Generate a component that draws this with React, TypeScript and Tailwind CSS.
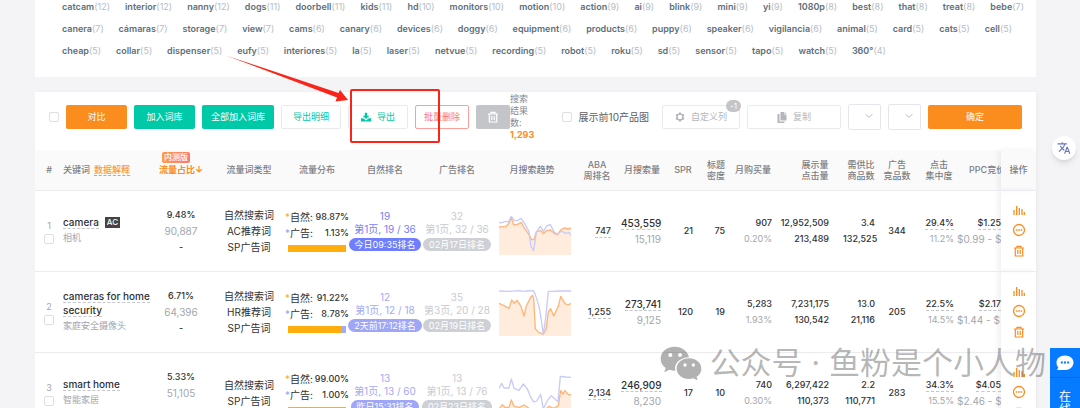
import type { ReactNode } from "react";
import { ChevronDown } from "lucide-react";
import { MdTranslate } from "react-icons/md";

type Word = [string, number];

const wordRows: { pad: string; words: Word[] }[] = [
  {
    pad: "pr-3",
    words: [
      ["catcam", 12], ["interior", 12], ["nanny", 12], ["dogs", 11], ["doorbell", 11], ["kids", 11],
      ["hd", 10], ["monitors", 10], ["motion", 10], ["action", 9], ["ai", 9], ["blink", 9], ["mini", 9],
      ["yi", 9], ["1080p", 8], ["best", 8], ["that", 8], ["treat", 8], ["bebe", 7],
    ],
  },
  {
    pad: "pr-6",
    words: [
      ["canera", 7], ["cámaras", 7], ["storage", 7], ["view", 7], ["cams", 6], ["canary", 6],
      ["devices", 6], ["doggy", 6], ["equipment", 6], ["products", 6], ["puppy", 6], ["speaker", 6],
      ["vigilancia", 6], ["animal", 5], ["card", 5], ["cats", 5], ["cell", 5],
    ],
  },
  {
    pad: "pr-[150px]",
    words: [
      ["cheap", 5], ["collar", 5], ["dispenser", 5], ["eufy", 5], ["interiores", 5], ["la", 5],
      ["laser", 5], ["netvue", 5], ["recording", 5], ["robot", 5], ["roku", 5], ["sd", 5],
      ["sensor", 5], ["tapo", 5], ["watch", 5], ["360°", 4],
    ],
  },
];

const rows = [
  {
    id: 1,
    keyword: ["camera"],
    ac: true,
    cn: "相机",
    share: ["9.48%", "90,887", "-"],
    types: ["自然搜索词", "AC推荐词", "SP广告词"],
    natural: "98.87%",
    ad: "1.13%",
    bar: 98.87,
    rank: ["19", "第1页, 19 / 36", "今日09:35排名"],
    fresh: true,
    adRank: ["32", "第1页, 32 / 36", "02月17日排名"],
    orange: "0,60 10,59 20,59 30,49 37,31 44,54 55,52 67,46 75,62 88,80 98,98 105,98 112,74 125,71 133,80 142,71 155,69 167,80 175,83 185,69 195,63 207,66 216,63",
    blue: "0,47 10,47 20,43 28,45 37,28 47,41 58,40 66,34 75,46 90,74 96,119 104,131 112,76 124,58 133,73 143,57 154,53 165,74 176,82 187,72 200,79 210,76 216,84",
    aba: "747",
    search: ["453,559", "15,119"],
    spr: "21",
    density: "75",
    buy: ["907", "0.20%"],
    shown: ["12,952,509", "213,489"],
    supply: ["3.4", "132,525"],
    rivals: "344",
    click: ["29.4%", "11.2%"],
    ppc: ["$1.25", "$0.99 - $"],
  },
  {
    id: 2,
    keyword: ["cameras for home", "security"],
    ac: false,
    cn: "家庭安全摄像头",
    share: ["6.71%", "64,396", "-"],
    types: ["自然搜索词", "HR推荐词", "SP广告词"],
    natural: "91.22%",
    ad: "8.78%",
    bar: 91.22,
    rank: ["12", "第1页, 12 / 18", "2天前17:12排名"],
    fresh: false,
    adRank: ["35", "第3页, 20 / 28", "02月19日排名"],
    orange: "0,46 15,53 30,61 38,36 46,46 54,37 66,55 75,84 82,54 95,28 101,22 104,32 109,122 120,134 133,138 141,125 148,72 155,62 164,84 178,55 185,25 198,47 208,51 216,46",
    blue: "0,9 30,10 60,8 75,10 84,9 104,8 111,26 120,56 127,96 133,140 140,90 148,10 160,10 180,9 216,9",
    aba: "1,255",
    search: ["273,741", "9,125"],
    spr: "120",
    density: "19",
    buy: ["5,283", "1.93%"],
    shown: ["7,231,175", "130,542"],
    supply: ["13.0", "21,116"],
    rivals: "205",
    click: ["22.5%", "14.5%"],
    ppc: ["$2.17", "$1.44 - $"],
  },
  {
    id: 3,
    keyword: ["smart home"],
    ac: false,
    cn: "智能家居",
    share: ["5.33%", "51,105", "-"],
    types: ["自然搜索词", "SP广告词"],
    natural: "99.00%",
    ad: "1.00%",
    bar: 99,
    rank: ["13", "第1页, 13 / 60", "昨日15:31排名"],
    fresh: false,
    adRank: ["13", "第1页, 13 / 76", "02月23日排名"],
    orange: "0,120 10,107 18,115 30,115 37,93 45,112 60,115 75,108 90,118 130,130 150,112 165,118 178,110 185,65 192,75 198,65 208,77 216,77",
    blue: "0,58 8,43 15,57 30,57 37,30 45,58 60,64 73,45 85,60 95,85 105,99 113,96 125,76 133,120 145,95 157,80 177,98 184,22 200,24 216,25",
    aba: "2,134",
    search: ["246,909", "8,230"],
    spr: "17",
    density: "10",
    buy: ["740", "0.30%"],
    shown: ["6,297,422", "110,373"],
    supply: ["2.2", "110,771"],
    rivals: "283",
    click: ["34.3%", "15.5%"],
    ppc: ["$4.05", "$2.46 - $"],
  },
];

const boxClass = "block size-2.5 shrink-0 appearance-none rounded-xs border border-[#dcdfe6] bg-white";
const outline = "flex h-6 items-center justify-center rounded-xs border border-[#e8eaf0] bg-white";
const solid = "h-6 rounded-xs text-white";

function Dashed({ children }: { children: ReactNode }) {
  return <span className="inline-block border-b border-dashed border-[#c4c6cc] leading-3">{children}</span>;
}

function Pair({ values, dashed = false, muted = true }: { values: string[]; dashed?: boolean; muted?: boolean }) {
  return (
    <>
      <div className="h-4">{dashed ? <Dashed>{values[0]}</Dashed> : values[0]}</div>
      <div className={muted ? "h-4 font-normal text-[#a3a6ad]" : "h-4"}>{values[1]}</div>
    </>
  );
}

function Rank({ values, text, pill }: { values: string[]; text: string; pill: string }) {
  return (
    <div className={`flex flex-col items-center text-[10px] leading-[13px] font-normal whitespace-nowrap ${text}`}>
      <span>{values[0]}</span>
      <span>{values[1]}</span>
      <span className={`mt-0.5 rounded-full px-1.5 text-[9px] text-white ${pill}`}>{values[2]}</span>
    </div>
  );
}

function Trend({ orange, blue }: { orange: string; blue: string }) {
  return (
    <svg viewBox="0 0 216 144" className="ml-1 h-12 w-[72px]" fill="none" strokeWidth="4" strokeLinejoin="round">
      <polygon points={`0,144 ${orange} 216,144`} fill="#ffecdd" />
      <polyline points={orange} stroke="#ffb57a" />
      <polyline points={blue} stroke="#c8cbfa" />
    </svg>
  );
}

function DownloadIcon() {
  return (
    <svg viewBox="0 0 16 16" className="size-2.5" fill="currentColor">
      <path d="M6 1h4v5h3.500L8 11 2.500 6H6z" />
      <path d="M0 10h3.500L8 13.500 12.500 10H16v5H0z" />
    </svg>
  );
}

function GearIcon() {
  return (
    <svg viewBox="0 0 20 20" className="size-2.5" fill="none" stroke="currentColor">
      <circle cx="10" cy="10" r="6" strokeWidth="3" />
      <path d="M10 1v3M10 16v3M2.200 5.500l2.600 1.500M15.200 13l2.600 1.500M2.200 14.500l2.600-1.500M15.200 7l2.600-1.500" strokeWidth="4" />
    </svg>
  );
}

function CopyIcon() {
  return (
    <svg viewBox="0 0 20 22" className="h-[11px] w-2.5" fill="currentColor">
      <path d="M7 0h7v5h5v12H7z" />
      <path d="M15 0l4 4h-4z" />
      <path d="M1 4h4v15h10v3H1z" />
    </svg>
  );
}

function BarsIcon() {
  return (
    <svg viewBox="0 0 12 10" className="h-2.5 w-3" stroke="currentColor" strokeWidth="1.300">
      <path d="M1 5v5M3.700 1v9M6.300 3v7M9 4v6M11.300 7v3" />
    </svg>
  );
}

function MoreIcon() {
  return (
    <svg viewBox="0 0 14 14" className="size-3.5" fill="none" stroke="currentColor">
      <circle cx="7" cy="7" r="5.500" strokeWidth="1.300" />
      <path d="M3.800 7h1.600M6.200 7h1.600M8.600 7h1.600" strokeWidth="1.500" />
    </svg>
  );
}

function BinIcon() {
  return (
    <svg viewBox="0 0 12 12" className="size-3" fill="none" stroke="currentColor" strokeWidth="1.200">
      <path d="M1 3h10M4 3V1.300h4V3M2.300 3v8h7.400V3M4.800 5v4M7.200 5v4" />
    </svg>
  );
}

function Keywords() {
  return (
    <section className="flex h-[77px] flex-col gap-2 bg-white pl-[27px] text-[9px] text-[#606f7b]">
      {wordRows.map((row, i) => (
        <div key={i} className={`flex items-center justify-between leading-[14px] ${row.pad}`}>
          {row.words.map(([word, count]) => (
            <span key={word} className="whitespace-nowrap">
              <b className="font-semibold">{word}</b>
              <span className="text-[#b4bcc6]">({count})</span>
            </span>
          ))}
        </div>
      ))}
    </section>
  );
}

function Toolbar() {
  return (
    <div className="flex h-[58px] items-center gap-[7px] pr-3.5 pb-2 pl-3.5 text-[9px] whitespace-nowrap">
      <input type="checkbox" aria-label="全选" className={boxClass} />
      <button className={`${solid} w-[61px] bg-[#fb8c1e]`}>对比</button>
      <button className={`${solid} w-[61px] bg-[#00c9a7]`}>加入词库</button>
      <button className={`${solid} w-[72px] bg-[#00c9a7]`}>全部加入词库</button>
      <button className={`${outline} w-[60px] text-[#00c9a7]`}>导出明细</button>
      <button className={`${outline} w-[60px] gap-1.5 text-[#00c9a7]`}>
        <DownloadIcon />
        导出
      </button>
      <button className="h-6 w-[54px] rounded-xs border border-[#ff9c9c] text-[#ff6f6f]">批量删除</button>
      <div className="flex items-center">
        <button aria-label="删除" className="flex h-6 w-[34px] items-center justify-center rounded-xs bg-[#c3c5c9] text-white">
          <BinIcon />
        </button>
        <div className="w-6 leading-3 text-[#85878c]">
          搜索
          <br />
          结果
          <br />
          数:
          <br />
          <b className="font-bold text-[#fb8c1e]">1,293</b>
        </div>
      </div>
      <label className="mr-1.5 ml-auto flex items-center gap-[7px] text-[10px] text-[#5b5d63]">
        <input type="checkbox" className={boxClass} />
        展示前10产品图
      </label>
      <button className={`${outline} relative w-[78px] gap-1.5 text-[#b4b6bb]`}>
        <GearIcon />
        自定义列
        <span className="absolute -top-1.5 -right-0.5 h-3 rounded-full bg-[#c3c5c9] px-1 text-[8px] leading-3 text-white">-1</span>
      </button>
      <button className={`${outline} w-[94px] gap-1.5 text-[#b4b6bb]`}>
        <CopyIcon />
        复制
      </button>
      {["排序", "筛选"].map((name) => (
        <span key={name} className="relative">
          <select aria-label={name} className="block h-[26px] w-[33px] appearance-none rounded-xs border border-[#e4e7ed] bg-white" />
          <ChevronDown strokeWidth={2} className="pointer-events-none absolute top-1.5 right-1.5 size-3 text-[#b4b6bb]" />
        </span>
      ))}
      <button className={`${solid} w-[94px] bg-[#fb8c1e]`}>确定</button>
    </div>
  );
}

function ResultTable() {
  return (
    <table className="w-full table-fixed border-collapse text-[9px] font-medium text-[#303133]">
      <colgroup>
        <col className="w-7" />
        <col />
        <col className="w-[68px]" />
        <col className="w-[68px]" />
        <col className="w-[68px]" />
        <col className="w-[68px]" />
        <col className="w-[76px]" />
        <col className="w-[78px]" />
        <col className="w-12" />
        <col className="w-[42px]" />
        <col className="w-10" />
        <col className="w-[26px]" />
        <col className="w-12" />
        <col className="w-[66px]" />
        <col className="w-9" />
        <col className="w-9" />
        <col className="w-[42px]" />
        <col className="w-11" />
        <col className="w-[35px]" />
      </colgroup>
      <thead>
        <tr className="h-10 border-b border-[#ececf0] bg-[#fafafa] leading-[11px] whitespace-nowrap text-[#7c7e83] [&>th]:p-0 [&>th]:font-medium">
          <th>#</th>
          <th className="text-left">
            关键词
            <a href="#explain" className="ml-1 inline-block border-b border-dashed border-[#fb9a3c] text-[#fb9a3c]">
              数据解释
            </a>
          </th>
          <th className="relative text-[#fb8c1e]">
            <span className="absolute top-0.5 left-[15px] rounded-xs bg-linear-to-r from-[#ff9a44] to-[#fc7b6b] px-0.5 text-[8px] text-white">
              内测版
            </span>
            <b className="font-bold">流量占比↓</b>
          </th>
          <th>流量词类型</th>
          <th>流量分布</th>
          <th>自然排名</th>
          <th>广告排名</th>
          <th><span className="mr-1">月搜索趋势</span></th>
          <th>ABA<br />周排名</th>
          <th>月搜索量</th>
          <th>SPR</th>
          <th>标题<br />密度</th>
          <th>月购买量</th>
          <th><span className="ml-2.5 inline-block">展示量<br />点击量</span></th>
          <th>需供比<br />商品数</th>
          <th>广告<br />竞品数</th>
          <th><span className="ml-1.5 inline-block">点击<br />集中度</span></th>
          <th className="overflow-hidden text-left"><span className="ml-3">PPC竞价</span></th>
          <th className="shadow-[-3px_0_5px_rgba(0,0,0,0.06)]">操作</th>
        </tr>
      </thead>
      <tbody>
        {rows.map((row) => (
          <tr key={row.id} className="h-[81px] border-b border-[#ececf0] leading-4 [&>td]:p-0 [&>td]:align-middle">
            <td className="text-center font-normal text-[#a3a6ad]">
              <div>{row.id}</div>
              <input type="checkbox" aria-label={row.keyword.join(" ")} className={`${boxClass} mx-auto`} />
            </td>
            <td className="whitespace-nowrap">
              {row.keyword.map((line) => (
                <div key={line} className="flex h-3.5 items-center gap-1.5 text-[10px]">
                  <Dashed>{line}</Dashed>
                  {row.ac && <span className="bg-[#444] px-0.5 text-[8px] leading-[11px] text-white">AC</span>}
                </div>
              ))}
              <div className="font-normal text-[#a3a6ad]">{row.cn}</div>
            </td>
            <td className="text-center">
              <div>{row.share[0]}</div>
              <div className="text-[10px] font-normal text-[#a3a6ad]">{row.share[1]}</div>
              <div>{row.share[2]}</div>
            </td>
            <td className="text-center text-[10px] font-normal">
              {row.types.map((type) => (
                <div key={type}>{type}</div>
              ))}
            </td>
            <td className="whitespace-nowrap">
              <div className="flex justify-between px-0.5">
                <span className="text-[10px] font-normal"><span className="text-[#ffae0d]">*</span>自然:</span>
                <span>{row.natural}</span>
              </div>
              <div className="flex justify-between px-0.5">
                <span className="text-[10px] font-normal"><span className="text-[#9aa2fb]">*</span>广告:</span>
                <span>{row.ad}</span>
              </div>
              <div className="mx-[5px] mt-1 h-[7px] bg-[#a3a9fb]">
                <div className="h-full bg-[#ffae0d]" style={{ width: `${row.bar}%` }} />
              </div>
            </td>
            <td>
              <Rank
                values={row.rank}
                text={row.fresh ? "text-[#7580fa]" : "text-[#a3a9f5]"}
                pill={row.fresh ? "bg-[#707dfc]" : "bg-[#9fa6f7]"}
              />
            </td>
            <td><Rank values={row.adRank} text="text-[#c9cbd0]" pill="bg-[#cdd0d5]" /></td>
            <td><Trend orange={row.orange} blue={row.blue} /></td>
            <td className="text-right"><span className="mr-2.5"><Dashed>{row.aba}</Dashed></span></td>
            <td className="text-right text-[10px]"><div className="pr-0.5"><Pair values={row.search} dashed /></div></td>
            <td className="text-right"><span className="mr-2.5">{row.spr}</span></td>
            <td className="text-right"><span className="mr-1">{row.density}</span></td>
            <td className="text-right"><div className="pr-[5px]"><Pair values={row.buy} /></div></td>
            <td className="text-right"><div className="pr-3.5"><Pair values={row.shown} muted={false} /></div></td>
            <td className="text-right"><div className="pr-1"><Pair values={row.supply} muted={false} /></div></td>
            <td className="text-center">{row.rivals}</td>
            <td className="text-right"><div className="pr-[3px]"><Pair values={row.click} dashed /></div></td>
            <td className="overflow-hidden whitespace-nowrap">
              <div className="h-4 text-right"><Dashed>{row.ppc[0]}</Dashed></div>
              <div className="h-4 text-[10px] font-normal text-[#a3a6ad]">{row.ppc[1]}</div>
            </td>
            <td className="shadow-[-3px_0_5px_rgba(0,0,0,0.06)]">
              <div className="flex flex-col items-center gap-2 text-[#fb8c1e]">
                <button aria-label="趋势"><BarsIcon /></button>
                <button aria-label="更多"><MoreIcon /></button>
                <button aria-label="删除"><BinIcon /></button>
              </div>
            </td>
          </tr>
        ))}
      </tbody>
    </table>
  );
}

// Red box and arrow pointing at the export button
function Callout() {
  return (
    <>
      <svg className="pointer-events-none absolute top-[50px] left-[220px] h-[60px] w-[135px]" viewBox="0 0 135 60" fill="#fb2418">
        <path d="M6 5.500 L118.500 43 L120 40 L128 50 L115.500 51.500 L117 47.500 Z" />
      </svg>
      <div className="pointer-events-none absolute top-[89px] left-[350px] h-[54px] w-[90px] rounded-xs border-2 border-[#fb2418]" />
    </>
  );
}

function Watermark() {
  return (
    <div className="pointer-events-none absolute right-[34px] bottom-[23px] flex items-center gap-2 text-[31px] leading-11 whitespace-nowrap text-black/30">
      <svg viewBox="0 0 126 102" className="h-[34px] w-[42px] opacity-30" fill="#000">
        <path
          fillRule="evenodd"
          d="M44 2C20 2 2 18 2 38c0 12 6 21 15 28l-4 13 15-8c6 2 12 3 18 3C41 52 60 35 87 34 83 15 66 2 44 2zM31 21a6 6 0 1 1 0 12a6 6 0 0 1 0-12zM60 21a6 6 0 1 1 0 12a6 6 0 0 1 0-12z"
        />
        <path
          fillRule="evenodd"
          d="M87 37c-21 0-37 14-37 31s16 31 37 31c5 0 9-1 13-2l13 6-3-11c9-6 14-14 14-24 0-17-16-31-37-31zM75 52a5 5 0 1 1 0 10a5 5 0 0 1 0-10zM100 52a5 5 0 1 1 0 10a5 5 0 0 1 0-10z"
        />
      </svg>
      <span>公众号 · 鱼粉是个小人物</span>
    </div>
  );
}

export default function App() {
  return (
    <div className="relative h-screen overflow-hidden bg-[#f4f4f7] font-['Inter','Noto_Sans_CJK_SC',sans-serif]">
      <main className="mr-11 ml-[35px]">
        <Keywords />
        <section className="mt-[15px] bg-white shadow-[2px_0_4px_rgba(0,0,0,0.03)]">
          <Toolbar />
          <ResultTable />
        </section>
      </main>

      <Callout />
      <Watermark />

      <button
        aria-label="翻译"
        className="absolute top-[136px] right-1 flex size-6 items-center justify-center rounded-full bg-white text-[#6a75b8] shadow-md"
      >
        <MdTranslate className="size-3.5" />
      </button>

      <aside className="absolute right-0 bottom-0 flex h-[60px] w-[30px] flex-col items-center overflow-hidden bg-[#067bff] text-white">
        <div className="flex h-[30px] w-full shrink-0 items-center justify-center border-b border-[#0069e6]">
          <svg viewBox="0 0 18 16" className="h-4 w-[18px]" fill="#fff">
            <path d="M9 .5c5 0 8.500 3 8.500 7s-3.500 7.500-8.500 7.500H1l1.400-2.600C1.200 11.200.5 9.500.5 7.500.5 3.500 4 .5 9 .5z" />
            <path d="M4.800 7.500h2M8 7.500h2M11.200 7.500h2" stroke="#067bff" strokeWidth="1.800" />
          </svg>
        </div>
        <a href="#service" className="mt-3 w-3 text-[12px] leading-[13px]">在线</a>
      </aside>
    </div>
  );
}
